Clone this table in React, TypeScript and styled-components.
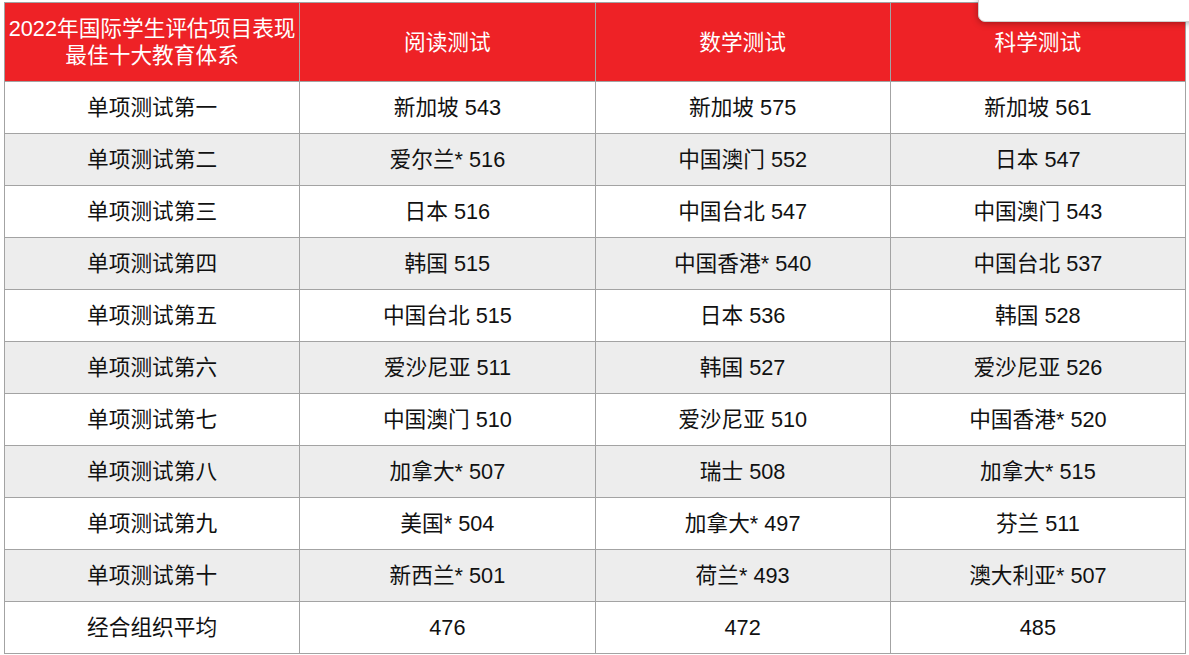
import styled, { createGlobalStyle } from "styled-components";

const GlobalStyle = createGlobalStyle`
  html, body {
    margin: 0;
    padding: 0;
    background: #ffffff;
  }
  body {
    font-family: "Liberation Sans", "Noto Sans CJK SC", Arial, sans-serif;
  }
`;

interface Row {
  label: string;
  reading: string;
  math: string;
  science: string;
}

const rows: Row[] = [
  { label: "单项测试第一", reading: "新加坡 543", math: "新加坡 575", science: "新加坡 561" },
  { label: "单项测试第二", reading: "爱尔兰* 516", math: "中国澳门 552", science: "日本 547" },
  { label: "单项测试第三", reading: "日本 516", math: "中国台北 547", science: "中国澳门 543" },
  { label: "单项测试第四", reading: "韩国 515", math: "中国香港* 540", science: "中国台北 537" },
  { label: "单项测试第五", reading: "中国台北 515", math: "日本 536", science: "韩国 528" },
  { label: "单项测试第六", reading: "爱沙尼亚 511", math: "韩国 527", science: "爱沙尼亚 526" },
  { label: "单项测试第七", reading: "中国澳门 510", math: "爱沙尼亚 510", science: "中国香港* 520" },
  { label: "单项测试第八", reading: "加拿大* 507", math: "瑞士 508", science: "加拿大* 515" },
  { label: "单项测试第九", reading: "美国* 504", math: "加拿大* 497", science: "芬兰 511" },
  { label: "单项测试第十", reading: "新西兰* 501", math: "荷兰* 493", science: "澳大利亚* 507" },
  { label: "经合组织平均", reading: "476", math: "472", science: "485" },
];

const Page = styled.div`
  position: relative;
  padding: 2px 0 0 4px;
`;

const Table = styled.table`
  width: 1182px;
  table-layout: fixed;
  border-collapse: collapse;
  font-size: 21.7px;
  color: #111111;
`;

const HeadCell = styled.th`
  height: 78px;
  padding: 0 1px;
  background: #ee2226;
  color: #ffffff;
  font-weight: normal;
  line-height: 27px;
  border: 1px solid #a3a3a3;
  vertical-align: middle;
  text-align: center;
`;

const BodyRow = styled.tr<{ $shaded: boolean }>`
  background: ${(p) => (p.$shaded ? "#ededed" : "#ffffff")};
`;

const Cell = styled.td`
  height: 51px;
  padding: 0;
  line-height: 26px;
  text-align: center;
  vertical-align: middle;
  border: 1px solid #a3a3a3;
`;

const Popover = styled.div`
  position: absolute;
  top: -1px;
  left: 978px;
  width: 230px;
  height: 21px;
  background: #ffffff;
  border: 1px solid #d0d0d0;
  border-bottom-left-radius: 7px;
  box-shadow: 0 1px 7px rgba(0, 0, 0, 0.35);
`;

export default function App() {
  return (
    <Page>
      <GlobalStyle />
      <Table>
        <thead>
          <tr>
            <HeadCell>2022年国际学生评估项目表现最佳十大教育体系</HeadCell>
            <HeadCell>阅读测试</HeadCell>
            <HeadCell>数学测试</HeadCell>
            <HeadCell>科学测试</HeadCell>
          </tr>
        </thead>
        <tbody>
          {rows.map((r, i) => (
            <BodyRow key={r.label} $shaded={i % 2 === 1}>
              <Cell>{r.label}</Cell>
              <Cell>{r.reading}</Cell>
              <Cell>{r.math}</Cell>
              <Cell>{r.science}</Cell>
            </BodyRow>
          ))}
        </tbody>
      </Table>
      <Popover />
    </Page>
  );
}
